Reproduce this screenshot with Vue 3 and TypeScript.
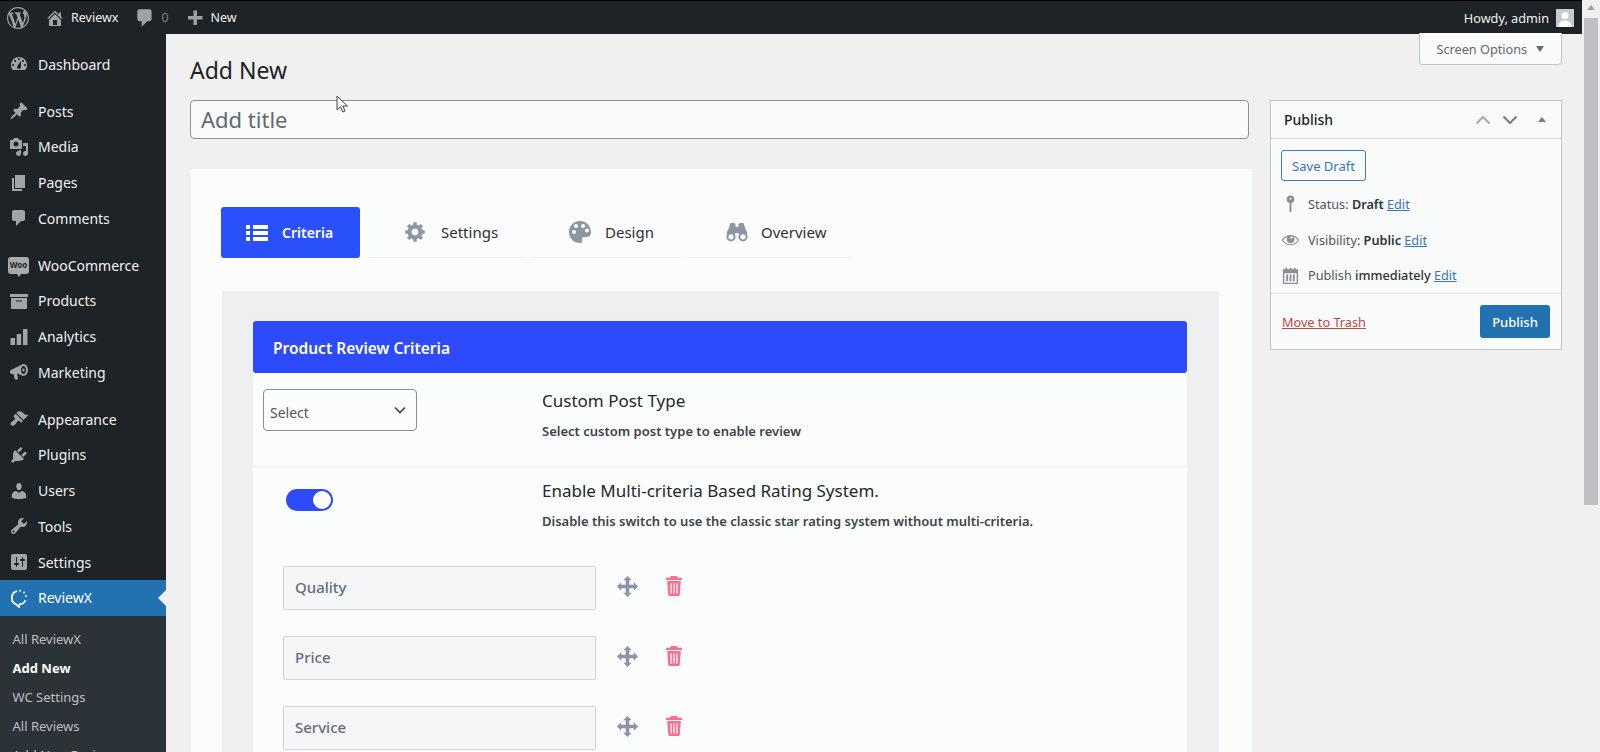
<script setup lang="ts">
interface MenuItem { label: string; d?: string; gap?: boolean; kind?: string }
const menu: MenuItem[] = [
  { label: 'Dashboard', d: 'M3.76 16h12.48c1.1-1.37 1.76-3.11 1.76-5 0-4.42-3.58-8-8-8s-8 3.58-8 8c0 1.89.66 3.63 1.76 5zM10 4c.55 0 1 .45 1 1s-.45 1-1 1-1-.45-1-1 .45-1 1-1zM6 6c.55 0 1 .45 1 1s-.45 1-1 1-1-.45-1-1 .45-1 1-1zm8 0c.55 0 1 .45 1 1s-.45 1-1 1-1-.45-1-1 .45-1 1-1zm-5.37 5.55L12 7v6c0 1.1-.9 2-2 2s-2-.9-2-2c0-.57.24-1.08.63-1.45zM4 10c.55 0 1 .45 1 1s-.45 1-1 1-1-.45-1-1 .45-1 1-1zm12 0c.55 0 1 .45 1 1s-.45 1-1 1-1-.45-1-1 .45-1 1-1z' },
  { label: 'Posts', gap: true, d: 'M10.44 3.02l1.82-1.82 6.36 6.35-1.83 1.82c-1.05-.68-2.48-.57-3.41.36l-.75.75c-.92.93-1.04 2.35-.35 3.41l-1.83 1.82-2.41-2.41-2.8 2.79c-.42.42-3.38 2.71-3.8 2.29s1.86-3.39 2.28-3.81l2.79-2.79L4.1 9.36l1.83-1.82c1.05.69 2.48.57 3.4-.36l.75-.75c.93-.92 1.05-2.35.36-3.41z' },
  { label: 'Media', d: 'M13 11V4c0-.55-.45-1-1-1h-1.67L9 1H5L3.67 3H2c-.55 0-1 .45-1 1v7c0 .55.45 1 1 1h10c.55 0 1-.45 1-1zM7 4.5c1.38 0 2.5 1.12 2.5 2.5S8.38 9.5 7 9.5 4.5 8.38 4.5 7 5.62 4.5 7 4.5zM14 6h5v10.5c0 1.38-1.12 2.5-2.5 2.5S14 17.88 14 16.5s1.12-2.5 2.5-2.5c.17 0 .34.02.5.05V9h-3V6zm-4 8.05V13h2v3.5c0 1.38-1.12 2.5-2.5 2.5S7 17.88 7 16.5 8.12 14 9.5 14c.17 0 .34.02.5.05z' },
  { label: 'Pages', d: 'M6 15V2h10v13H6zm-1 1h8v2H3V5h2v11z' },
  { label: 'Comments', d: 'M5 2h9c1.1 0 2 .9 2 2v7c0 1.1-.9 2-2 2h-2l-5 5v-5H5c-1.1 0-2-.9-2-2V4c0-1.1.9-2 2-2z' },
  { label: 'WooCommerce', gap: true, kind: 'woo' },
  { label: 'Products', d: 'M19 3v3H1V3h18zM2 7h16v10c0 .55-.45 1-1 1H3c-.55 0-1-.45-1-1V7zm5 2.5v1h6v-1H7z' },
  { label: 'Analytics', d: 'M1.500 11h4.500v7H1.500zM7.700 7h4.500v11H7.700zM14 2h4.500v16H14z' },
  { label: 'Marketing', d: 'M1 8.500l11-5.500c1-.5 1.500-1 2.500-1 2.500 0 4.500 2.800 4.500 6s-2 6-4.500 6c-1 0-1.500-.5-2.500-1l-4-1.500 1 5c.1.700-.3 1-1 1H6.500c-.6 0-.9-.3-1-.8L4.500 12H3c-1.100 0-2-.9-2-2V8.500zM14.500 4c-1.400 0-2.500 1.800-2.500 4s1.100 4 2.500 4S17 10.200 17 8s-1.100-4-2.500-4zm0 2.500c.7 0 1.200.7 1.200 1.500s-.5 1.500-1.200 1.500S13.300 8.800 13.300 8s.5-1.500 1.200-1.500z' },
  { label: 'Appearance', gap: true, d: 'M14.48 11.06L7.41 3.99l1.5-1.5c.5-.56 2.3-.47 3.51.32 1.21.8 1.43 1.28 2.91 2.1 1.18.64 2.45 1.26 4.45.85zm-.71.71L6.7 4.7 4.93 6.47c-.39.39-.39 1.02 0 1.41l1.06 1.06c.39.39.39 1.03 0 1.42-.6.6-1.43 1.11-2.21 1.69-.35.26-.7.53-1.01.84C1.43 13.23 1 14.81 2.07 16.05c1.45 1.45 3.17.23 4.25-.88.33-.33.6-.67.86-1.01.57-.77 1.09-1.61 1.68-2.2.39-.39 1.03-.39 1.42 0l1.06 1.06c.39.39 1.02.39 1.41 0z' },
  { label: 'Plugins', d: 'M13.11 4.36L9.87 7.6 8 5.73l3.24-3.24c.35-.34 1.05-.2 1.56.32.52.51.66 1.21.31 1.55zm-8 1.77l.91-1.12 9.01 9.01-1.19.84c-.71.71-2.63 1.16-3.82 1.16H6.14L4.9 17.26c-.59.59-1.54.59-2.12 0-.59-.58-.59-1.53 0-2.12l1.24-1.24v-3.88c0-1.13.4-3.19 1.09-3.89zm7.26 3.97l3.24-3.24c.34-.35 1.04-.21 1.55.31.52.51.66 1.21.31 1.55l-3.24 3.25z' },
  { label: 'Users', d: 'M10 9.25c-2.27 0-2.73-3.44-2.73-3.44C7 4.02 7.82 2 9.97 2c2.16 0 2.98 2.02 2.71 3.81 0 0-.41 3.44-2.68 3.44zm0 2.57L12.72 10c2.39 0 4.52 2.33 4.52 4.53v2.49s-3.65 1.13-7.24 1.13c-3.65 0-7.24-1.13-7.24-1.13v-2.49c0-2.25 1.94-4.48 4.47-4.48z' },
  { label: 'Tools', d: 'M16.68 9.77c-1.34 1.34-3.3 1.67-4.95.99l-5.41 6.52c-.99.99-2.59.99-3.58 0s-.99-2.59 0-3.57l6.52-5.42c-.68-1.65-.35-3.61.99-4.95 1.28-1.28 3.12-1.62 4.72-1.06l-2.89 2.89 2.82 2.82 2.86-2.87c.53 1.58.18 3.39-1.08 4.65zM3.81 16.21c.4.39 1.04.39 1.43 0 .4-.4.4-1.04 0-1.43-.39-.4-1.03-.4-1.43 0-.39.39-.39 1.03 0 1.43z' },
  { label: 'Settings', d: 'M18 16V4c0-1.100-.9-2-2-2H4c-1.100 0-2 .9-2 2v12c0 1.100.9 2 2 2h12c1.100 0 2-.9 2-2zM8 11h1c.55 0 1 .45 1 1s-.45 1-1 1H8v1.500c0 .28-.22.5-.5.5s-.5-.22-.5-.5V13H6c-.55 0-1-.45-1-1s.45-1 1-1h1V5.500c0-.28.22-.5.5-.5s.5.22.5.5V11zm5-2h-1c-.55 0-1-.45-1-1s.45-1 1-1h1V5.500c0-.28.22-.5.5-.5s.5.22.5.5V7h1c.55 0 1 .45 1 1s-.45 1-1 1h-1v5.500c0 .28-.22.5-.5.5s-.5-.22-.5-.5V9z' },
]
const subMenu = ['All ReviewX', 'Add New', 'WC Settings', 'All Reviews', 'Add New Review']
const gear = 'M18 12h-2.180c-.17.7-.44 1.350-.81 1.930l1.540 1.540-2.100 2.100-1.540-1.540c-.58.36-1.230.63-1.910.79V19H8v-2.180c-.68-.16-1.330-.43-1.910-.79l-1.540 1.540-2.120-2.120 1.540-1.540c-.36-.58-.63-1.230-.79-1.910H1V9.030h2.170c.16-.7.44-1.350.8-1.940L2.430 5.550l2.100-2.100 1.540 1.540c.58-.37 1.240-.64 1.930-.81V2h3v2.180c.68.16 1.330.43 1.910.79l1.540-1.540 2.120 2.120-1.540 1.540c.36.59.64 1.240.8 1.940H18V12zm-8.500 1.500c1.660 0 3-1.340 3-3s-1.340-3-3-3-3 1.340-3 3 1.340 3 3 3z'
const criteria = ['Quality', 'Price', 'Service']
</script>

<template>
  <div class="screen">
    <div class="page">
      <header class="adminbar">
        <svg class="bar-wp" viewBox="0 0 20 20"><path d="M20 10c0-5.510-4.490-10-10-10C4.480 0 0 4.490 0 10c0 5.520 4.480 10 10 10 5.510 0 10-4.480 10-10zM7.780 15.370L4.370 6.220c.55-.02 1.170-.08 1.170-.08.5-.06.44-1.130-.06-1.110 0 0-1.450.11-2.370.11-.18 0-.37 0-.58-.01C4.120 2.690 6.870 1.110 10 1.110c2.330 0 4.450.87 6.050 2.340-.68-.11-1.650.39-1.650 1.580 0 .74.45 1.360.9 2.100.35.61.55 1.360.55 2.460 0 1.490-1.400 5-1.400 5l-3.030-8.370c.54-.02.82-.17.82-.17.5-.05.44-1.250-.06-1.220 0 0-1.440.12-2.380.12-.87 0-2.330-.12-2.330-.12-.5-.03-.56 1.200-.06 1.220l.92.08 1.260 3.410zM17.410 10c.24-.64.74-1.870.43-4.250.7 1.290 1.050 2.710 1.050 4.250 0 3.290-1.730 6.240-4.400 7.780.97-2.590 1.940-5.200 2.920-7.780zM6.100 18.090C3.120 16.650 1.110 13.530 1.110 10c0-1.300.23-2.480.72-3.590C3.250 10.300 4.670 14.200 6.100 18.090zm4.030-6.630l2.580 6.980c-.86.29-1.760.45-2.710.45-.79 0-1.570-.11-2.290-.33.81-2.380 1.620-4.740 2.420-7.100z"/></svg>
        <svg class="bar-ic home" viewBox="0 0 20 20"><path d="M16 8.500l1.530 1.530-1.060 1.060L10 4.620l-6.470 6.470-1.060-1.060L10 2.500l4 4v-2h2v4zm-6-2.460l6 5.990V18H4v-5.970zM12 17v-5H8v5h4z"/></svg>
        <span class="bar-text site">Reviewx</span>
        <svg class="bar-ic cmt" viewBox="0 0 20 20"><path d="M5 2h9c1.100 0 2 .9 2 2v7c0 1.100-.9 2-2 2h-2l-5 5v-5H5c-1.100 0-2-.9-2-2V4c0-1.100.9-2 2-2z"/></svg>
        <span class="bar-text zero">0</span>
        <svg class="bar-ic plus" viewBox="0 0 20 20"><path d="M17.500 8v3.500H12V17H8.500v-5.500H3V8h5.500V2.500H12V8z"/></svg>
        <span class="bar-text">New</span>
        <span class="howdy">Howdy, admin</span>
        <span class="avatar"><svg viewBox="0 0 18 18"><rect width="18" height="18" fill="#c9c9c9"/><circle cx="9" cy="6.500" r="3.500" fill="#fff"/><path d="M2.500 18c0-4.500 3-6.500 6.500-6.500s6.500 2 6.500 6.500z" fill="#fff"/></svg></span>
      </header>

      <div class="body">
        <aside class="sidebar">
          <nav class="menu">
            <a v-for="m in menu" :key="m.label" class="item" :class="{ gap: m.gap }">
              <span v-if="m.kind === 'woo'" class="woo"><span class="woo-text">Woo</span></span>
              <svg v-else class="mi" viewBox="0 0 20 20"><path :d="m.d" fill-rule="evenodd"/></svg>
              <span>{{ m.label }}</span>
            </a>
            <a class="item current">
              <svg class="mi rx" viewBox="0 0 20 20"><path d="M8 3.200A7 7 0 0 0 7.600 16.600l2.300 2.400.700-2.600a7 7 0 0 0 6-4.400" fill="none" stroke="#fff" stroke-width="1.800"/><circle cx="11" cy="2.800" r="1" fill="#fff"/><circle cx="15" cy="4.500" r="1" fill="#fff"/><circle cx="17" cy="8" r="1" fill="#fff"/></svg>
              <span>ReviewX</span>
              <i class="notch"></i>
            </a>
            <div class="submenu">
              <a v-for="s in subMenu" :key="s" :class="{ on: s === 'Add New' }">{{ s }}</a>
            </div>
          </nav>
        </aside>

        <main class="main">
          <button class="screen-options">Screen Options <i class="tri"></i></button>
          <h1 class="title">Add New</h1>
          <div class="columns">
            <div class="editor">
              <div class="title-input">Add title</div>
              <svg class="cursor" viewBox="0 0 12 19"><path d="M1 1v14l3.500-3.200 2.200 5.200 2.300-1-2.200-5h4.700z" fill="#f6f7f7" stroke="#444" stroke-width="1"/></svg>
              <section class="panel">
                <div class="tabs">
                  <div class="tab active">
                    <svg class="tab-ic" viewBox="0 0 22 20"><path fill="#fff" d="M0 2h4v4H0zM7 2h15v4H7zM0 8h4v4H0zM7 8h15v4H7zM0 14h4v4H0zM7 14h15v4H7z"/></svg>
                    <span>Criteria</span>
                  </div>
                  <div class="tab s">
                    <svg class="tab-ic gear" viewBox="0 0 19 21"><path :d="gear" fill="#8f96a3"/></svg>
                    <span>Settings</span>
                  </div>
                  <div class="tab d">
                    <svg class="tab-ic" viewBox="0 0 22 22"><path fill-rule="evenodd" fill="#8f96a3" d="M11 0C4.900 0 0 4.900 0 11s4.900 11 11 11c2 0 2.700-1.500 2.200-2.900-.5-1.300-.2-2.600 1.300-3.100h3.500c2.300 0 4-1.700 4-4C22 4.500 17 0 11 0zM5 13a2 2 0 1 1 0-4 2 2 0 0 1 0 4zm2-6a2 2 0 1 1 0-4 2 2 0 0 1 0 4zm7 0a2 2 0 1 1 0-4 2 2 0 0 1 0 4zm4 4.500a2 2 0 1 1 0-4 2 2 0 0 1 0 4z"/></svg>
                    <span>Design</span>
                  </div>
                  <div class="tab o">
                    <svg class="tab-ic" viewBox="0 0 22 20"><path fill-rule="evenodd" fill="#8f96a3" d="M3.800 3C3.800 1.500 5 .8 6.500.8c1.700 0 3 .7 3 2.200v9H.6C.6 9 3 7 3.800 3zM18.200 3c0-1.500-1.200-2.200-2.700-2.200-1.700 0-3 .7-3 2.200v9h8.900C21.400 9 19 7 18.200 3zM9.500 5h3v6h-3z"/><circle cx="5" cy="14.800" r="3.600" fill="#fbfcfc" stroke="#8f96a3" stroke-width="2"/><circle cx="17" cy="14.800" r="3.600" fill="#fbfcfc" stroke="#8f96a3" stroke-width="2"/></svg>
                    <span>Overview</span>
                  </div>
                </div>
                <div class="well">
                  <div class="card">
                    <div class="card-head">Product Review Criteria</div>
                    <div class="row first">
                      <div class="col-left">
                        <div class="select"><span>Select</span><svg viewBox="0 0 12 8"><path d="M1 1.500l5 5 5-5" fill="none" stroke="#3c434a" stroke-width="1.600"/></svg></div>
                      </div>
                      <div class="col-right">
                        <h3>Custom Post Type</h3>
                        <p>Select custom post type to enable review</p>
                      </div>
                    </div>
                    <div class="row second">
                      <div class="col-left"><div class="toggle"><i></i></div></div>
                      <div class="col-right">
                        <h3>Enable Multi-criteria Based Rating System.</h3>
                        <p>Disable this switch to use the classic star rating system without multi-criteria.</p>
                      </div>
                    </div>
                    <div class="criteria">
                      <div v-for="c in criteria" :key="c" class="crit">
                        <div class="crit-input">{{ c }}</div>
                        <svg class="move" viewBox="0 0 20 20"><path fill="#8b95a8" d="M10 0l4 4h-2.300v4.300H16V6l4 4-4 4v-2.300h-4.300V16H14l-4 4-4-4h2.300v-4.300H4V14l-4-4 4-4v2.300h4.300V4H6z"/></svg>
                        <svg class="trash" viewBox="0 0 16 20"><path fill-rule="evenodd" fill="#fb6f8c" d="M5 0h6l1 1.800h4V4H0V1.800h4zM1.200 5h13.600l-1 13.500c-.1.900-.7 1.500-1.600 1.500H3.800c-.9 0-1.500-.6-1.600-1.500zM4.500 7.500v10h1.300v-10zm2.900 0v10h1.300v-10zm2.900 0v10h1.300v-10z"/></svg>
                      </div>
                    </div>
                  </div>
                </div>
              </section>
            </div>

            <aside class="publish">
              <div class="pub-head">
                <span class="pub-title">Publish</span>
                <svg class="h-ar up" viewBox="0 0 16 10"><path d="M1.500 8.500L8 2l6.500 6.500" fill="none" stroke="#a7aaad" stroke-width="2"/></svg>
                <svg class="h-ar down" viewBox="0 0 16 10"><path d="M1.500 1.500L8 8l6.500-6.500" fill="none" stroke="#787c82" stroke-width="2"/></svg>
                <i class="h-tri"></i>
              </div>
              <div class="pub-body">
                <button class="save">Save Draft</button>
                <div class="meta m1">
                  <svg class="m-ic" viewBox="0 0 20 20"><circle cx="10" cy="5.500" r="4" fill="#8c8f94"/><circle cx="10" cy="5" r="1" fill="#f6f7f7"/><rect x="9" y="8" width="2" height="11" fill="#8c8f94"/></svg>
                  <span>Status: <b>Draft</b> <a>Edit</a></span>
                </div>
                <div class="meta">
                  <svg class="m-ic" viewBox="0 0 20 20"><path fill="#8c8f94" d="M18.300 9.500C15 4.900 8.500 3.800 3.900 7.200c-1.200.9-2.200 2.100-3 3.400.2.400.5.8.8 1.200 3.300 4.600 9.600 5.600 14.200 2.400.9-.7 1.700-1.400 2.400-2.400.3-.4.5-.8.8-1.200-.3-.4-.5-.8-.8-1.100zm-8.200-2.300c.5-.5 1.300-.5 1.800 0s.5 1.300 0 1.800-1.300.5-1.800 0c-.5-.4-.5-1.300 0-1.800zm-.1 7.700c-3.100 0-6-1.600-7.700-4.200C3.500 9 5.100 7.800 7 7.200c-.7.8-1 1.700-1 2.700 0 2.200 1.700 4.100 4 4.100 2.200 0 4.100-1.700 4.100-4v-.1c0-1-.4-2-1.100-2.700 1.900.6 3.500 1.800 4.700 3.500-1.700 2.600-4.600 4.200-7.700 4.200z"/></svg>
                  <span>Visibility: <b>Public</b> <a>Edit</a></span>
                </div>
                <div class="meta">
                  <svg class="m-ic" viewBox="0 0 20 20"><path fill-rule="evenodd" fill="#8c8f94" d="M2 3.500h2.500V2h2v1.500h2.500V2h2v1.500h2.500V2h2v1.500H18V19H2zM3.500 7.500V17.500h13V7.500zM5.500 9h2v7h-2zM9 9h2v7H9zM12.500 9h2v7h-2z"/></svg>
                  <span>Publish <b class="imm">immediately</b> <a>Edit</a></span>
                </div>
              </div>
              <div class="pub-foot">
                <a class="trash-link">Move to Trash</a>
                <button class="publish-btn">Publish</button>
              </div>
            </aside>
          </div>
        </main>
      </div>
    </div>
    <div class="scrollbar">
      <i class="sb-up"></i>
      <i class="sb-thumb"></i>
    </div>
  </div>
</template>

<style>
html, body { margin: 0; height: 100%; overflow: hidden; background: #f0f0f1; }
</style>

<style scoped>
* { box-sizing: border-box; }
.screen { display: flex; width: 1600px; height: 752px; overflow: hidden; font-family: "Noto Sans", "Liberation Sans", sans-serif; color: #3c434a; background: #f0f0f1; }
.page { width: 1582px; height: 752px; display: flex; flex-direction: column; overflow: hidden; }
.scrollbar { width: 18px; height: 752px; background: #eff0f1; padding-top: 5px; display: flex; flex-direction: column; align-items: center; }
.sb-up { width: 0; height: 0; border-left: 4px solid transparent; border-right: 4px solid transparent; border-bottom: 5px solid #a3a3a3; margin-bottom: 8px; }
.sb-thumb { width: 14px; height: 487px; background: #bfc0c3; }

.adminbar { height: 34px; flex: none; border-top: 1px solid #000; background: #1d2327; display: flex; align-items: center; color: #f0f0f1; font-size: 12.5px; padding-left: 7px; }
.bar-wp { width: 22px; height: 22px; fill: #9ca2a7; margin-right: 16px; }
.bar-ic { width: 20px; height: 20px; fill: #9ca2a7; }
.home { margin-left: 0; margin-right: 6px; }
.site { margin-right: 16px; }
.bar-ic.cmt { width: 22px; height: 22px; margin-right: 5px; }
.zero { color: #7d8389; margin-right: 16px; }
.plus { margin-right: 6px; }
.howdy { margin-left: auto; margin-right: 7px; font-size: 12.700px; }
.avatar { width: 18px; height: 18px; margin-right: 8px; display: block; }
.avatar svg { display: block; width: 18px; height: 18px; }

.body { flex: 1; display: flex; min-height: 0; }
.sidebar { width: 166px; flex: none; background: #1d2327; padding-top: 12.500px; overflow: hidden; }
.item { height: 35.750px; display: flex; align-items: center; gap: 9px; padding-left: 9px; color: #f0f0f1; font-size: 14px; position: relative; }
.item.gap { margin-top: 11px; }
.mi { width: 20px; height: 20px; fill: #a0a5aa; flex: none; }
.woo { width: 21px; height: 17px; margin-left: -1px; margin-right: 0; background: #a7aaad; border-radius: 3px; position: relative; display: flex; align-items: center; justify-content: center; flex: none; }
.woo::after { content: ""; position: absolute; left: 9px; bottom: -3px; border-left: 2px solid transparent; border-right: 2px solid transparent; border-top: 3px solid #a7aaad; }
.woo-text { font-size: 8px; font-weight: 700; color: #1d2327; line-height: 1; }
.current { background: #2271b1; color: #fff; margin-top: 0; }
.notch { position: absolute; right: 0; top: 50%; margin-top: -8px; border: 8px solid transparent; border-right-color: #f0f0f1; border-left: 0; }
.submenu { background: #2c3338; padding: 9px 0 7px; }
.submenu a { display: block; height: 29px; line-height: 29px; padding-left: 12.500px; font-size: 13px; color: #bcbfc2; white-space: nowrap; }
.submenu a.on { color: #fff; font-weight: 700; }

.main { flex: 1; min-width: 0; padding: 0 20px 0 24px; position: relative; }
.screen-options { position: absolute; right: 20px; top: -1px; width: 143px; height: 32px; border: 1px solid #c3c4c7; border-top: 0; border-radius: 0 0 4px 4px; background: #f9fafa; color: #646970; font: 12.700px "Noto Sans", sans-serif; padding: 0; }
.tri { display: inline-block; margin-left: 6px; vertical-align: 2px; border-left: 4px solid transparent; border-right: 4px solid transparent; border-top: 6px solid #646970; }
.title { margin: 0; padding-top: 20px; height: 66px; font-size: 23px; line-height: 32px; font-weight: 400; color: #1d2327; }
.columns { display: flex; gap: 21px; align-items: flex-start; }
.editor { width: 1059px; flex: none; position: relative; }
.title-input { height: 39px; border: 1px solid #8c8f94; border-radius: 4px; background: #f9fafa; font-size: 22px; line-height: 37px; padding-left: 10px; color: #646970; }
.cursor { position: absolute; left: 146px; top: -5px; width: 12px; height: 19px; }
.panel { margin: 30px -3px 0 1px; background: #fbfcfc; padding: 38px 30px 0; height: 600px; }
.tabs { display: flex; height: 51px; }
.tab { display: flex; align-items: center; font-size: 15px; color: #2b3036; position: relative; }
.tab.active { width: 139px; height: 51px; background: #2a50fb; border-radius: 3px; color: #fff; font-size: 14px; font-weight: 600; padding-left: 25px; gap: 14px; }
.tab.s { margin-left: 8px; width: 157px; padding-left: 35px; gap: 14px; border-bottom: 1px solid #f1f2f3; }
.tab.d { margin-left: 6px; width: 149px; padding-left: 38px; gap: 14px; border-bottom: 1px solid #f1f2f3; }
.tab.o { margin-left: 6px; width: 166px; padding-left: 40px; gap: 13px; border-bottom: 1px solid #f1f2f3; }
.tab-ic { width: 22px; height: 22px; flex: none; }
.tab-ic.gear { width: 24px; height: 24px; }
.well { margin: 33px 0 0 1px; background: #eeeff1; padding: 30px 32px 0 31px; height: 480px; width: 997px; }
.card { background: #fbfcfc; height: 460px; }
.card-head { height: 52px; background: #2d4bfb; border-radius: 3px; color: #fff; font-size: 15.500px; font-weight: 600; line-height: 54px; padding-left: 20px; }
.row { display: flex; }
.row.first { height: 94px; border-bottom: 1px solid #f0f1f2; padding-top: 16px; }
.row.second { height: 99px; padding-top: 12px; }
.col-left { width: 289px; flex: none; }
.select { width: 154px; height: 42px; margin-left: 10px; border: 1px solid #8c8f94; border-radius: 4px; display: flex; align-items: center; justify-content: space-between; padding: 4px 10px 0 6px; font-size: 14px; color: #50575e; }
.select svg { width: 12px; height: 8px; margin-top: -4px; }
.toggle { width: 47px; height: 22px; margin: 10px 0 0 33px; border-radius: 11px; background: #2d4bfb; position: relative; }
.toggle i { position: absolute; right: 2px; top: 2px; width: 18px; height: 18px; border-radius: 50%; background: #fff; }
.col-right h3 { margin: 0; font-size: 17px; line-height: 24px; font-weight: 400; color: #23282d; }
.col-right p { margin: 6px 0 0; font-size: 13px; line-height: 24px; font-weight: 600; color: #3c434a; }
.row.first .col-right p { margin-top: 6px; }
.criteria { padding-left: 30px; }
.crit { display: flex; align-items: center; height: 44px; margin-bottom: 26px; }
.crit-input { width: 313px; height: 44px; background: #f5f6f7; border: 1px solid #cfd3da; border-radius: 2px; padding-left: 11px; line-height: 40px; font-size: 15px; font-weight: 500; color: #646b80; }
.move { width: 21px; height: 21px; margin: -4px 0 0 21px; }
.trash { width: 16px; height: 20px; margin: -4px 0 0 28px; }

.publish { width: 292px; flex: none; height: 250px; background: #f9fafa; border: 1px solid #c3c4c7; color: #50575e; font-size: 12.700px; }
.pub-head { height: 38px; display: flex; align-items: center; border-bottom: 1px solid #dcdcde; padding: 0 15px 0 13px; }
.pub-title { font-size: 14px; color: #1d2327; margin-right: auto; font-weight: 500; }
.h-ar { width: 16px; height: 10px; }
.h-ar.up { margin-right: 11px; }
.h-ar.down { margin-right: 20px; }
.h-tri { border-left: 4px solid transparent; border-right: 4px solid transparent; border-bottom: 5px solid #787c82; }
.pub-body { padding: 11px 10px 0; height: 155px; border-bottom: 1px solid #e6e7e8; }
.save { width: 85px; height: 31px; display: block; background: #f9fafa; color: #3a74bd; border: 1px solid #3a7cc0; border-radius: 3px; font: 13px "Noto Sans", sans-serif; padding: 0; margin-bottom: 5px; }
.meta { height: 35.700px; display: flex; align-items: center; gap: 8px; white-space: nowrap; }
.m-ic { width: 19px; height: 19px; flex: none; }
.meta b { font-weight: 600; color: #2c3338; }
.meta b.imm { font-weight: 500; }
.meta a { color: #3a74bd; text-decoration: underline; }
.pub-foot { display: flex; align-items: center; justify-content: space-between; padding: 0 11px 0 11px; height: 55px; }
.trash-link { color: #b84a4a; text-decoration: underline; }
.publish-btn { width: 70px; height: 33px; background: #2271b1; color: #fff; border: 0; border-radius: 3px; font: 500 13px "Noto Sans", sans-serif; padding: 0; }
</style>
